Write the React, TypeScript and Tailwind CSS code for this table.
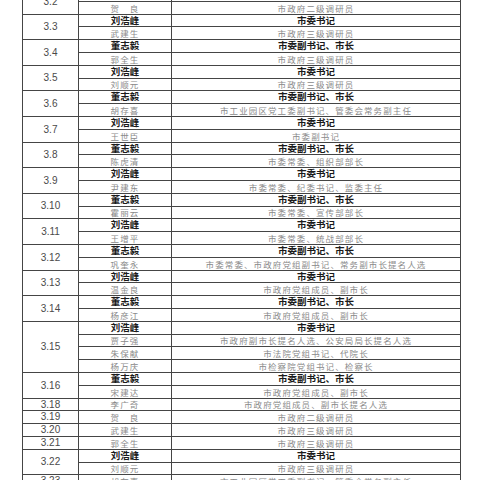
import React from "react";

type Row = { name: string; pos: string; bold: boolean };
type Group = { n: string; rows: Row[] };

const B = (name: string, pos: string): Row => ({ name, pos, bold: true });
const G = (name: string, pos: string): Row => ({ name, pos, bold: false });

const LIU = () => B("刘浩峰", "市委书记");
const DONG = () => B("董志毅", "市委副书记、市长");

const groups: Group[] = [
  { n: "3.2", rows: [DONG(), G("贺　良", "市政府二级调研员")] },
  { n: "3.3", rows: [LIU(), G("武建生", "市政府三级调研员")] },
  { n: "3.4", rows: [DONG(), G("郭全生", "市政府三级调研员")] },
  { n: "3.5", rows: [LIU(), G("刘顺元", "市政府三级调研员")] },
  { n: "3.6", rows: [DONG(), G("胡存喜", "市工业园区党工委副书记、管委会常务副主任")] },
  { n: "3.7", rows: [LIU(), G("王世臣", "市委副书记")] },
  { n: "3.8", rows: [DONG(), G("陈虎清", "市委常委、组织部部长")] },
  { n: "3.9", rows: [LIU(), G("尹建东", "市委常委、纪委书记、监委主任")] },
  { n: "3.10", rows: [DONG(), G("霍丽云", "市委常委、宣传部部长")] },
  { n: "3.11", rows: [LIU(), G("王增平", "市委常委、统战部部长")] },
  { n: "3.12", rows: [DONG(), G("巩奎永", "市委常委、市政府党组副书记、常务副市长提名人选")] },
  { n: "3.13", rows: [LIU(), G("温金良", "市政府党组成员、副市长")] },
  { n: "3.14", rows: [DONG(), G("杨彦江", "市政府党组成员、副市长")] },
  {
    n: "3.15",
    rows: [
      LIU(),
      G("贾子强", "市政府副市长提名人选、公安局局长提名人选"),
      G("朱保献", "市法院党组书记、代院长"),
      G("杨万庆", "市检察院党组书记、检察长"),
    ],
  },
  { n: "3.16", rows: [DONG(), G("宋建达", "市政府党组成员、副市长")] },
  { n: "3.18", rows: [G("李广奇", "市政府党组成员、副市长提名人选")] },
  { n: "3.19", rows: [G("贺　良", "市政府二级调研员")] },
  { n: "3.20", rows: [G("武建生", "市政府三级调研员")] },
  { n: "3.21", rows: [G("郭全生", "市政府三级调研员")] },
  { n: "3.22", rows: [LIU(), G("刘顺元", "市政府三级调研员")] },
  { n: "3.23", rows: [G("胡存喜", "市工业园区党工委副书记、管委会常务副主任")] },
];

const cjk = { fontFamily: '"Noto Sans CJK SC", "Noto Sans", sans-serif' };

// integer row edges so that every rule lands on a whole pixel (avg 12.8px pitch)
const edge = (k: number) => Math.round(12.8 * k);
const rowH = (k: number) => edge(k + 1) - edge(k);

function Cell({ text, bold }: { text: string; bold: boolean }) {
  return bold ? (
    <span className="text-[9.5px] leading-none font-bold text-[#1a1a1a]" style={cjk}>
      {text}
    </span>
  ) : (
    <span
      className="text-[8.5px] leading-none font-normal text-[#8a8a8a] tracking-[1.1px]"
      style={cjk}
    >
      {text}
    </span>
  );
}

export default function App() {
  let k = 0;
  return (
    <div className="w-[480px] h-[480px] overflow-hidden bg-white">
      <div className="mt-[-11px] ml-[22px] w-[439px] border-l border-r border-[#454545]">
        {groups.map((g) => (
          <div key={g.n} className="flex">
            <div className="w-[56px] shrink-0 border-r border-b border-[#454545] flex items-center justify-center">
              <span
                className="text-[10px] leading-none text-[#4a4a4a]"
                style={{ fontFamily: '"Liberation Sans", Arial, sans-serif' }}
              >
                {g.n}
              </span>
            </div>
            <div className="flex-1 flex flex-col">
              {g.rows.map((r, i) => {
                const h = rowH(k++);
                return (
                  <div
                    key={i}
                    className="flex border-b border-[#454545]"
                    style={{ height: h }}
                  >
                    <div className="w-[93px] shrink-0 border-r border-[#454545] flex items-center justify-center">
                      <Cell text={r.name} bold={r.bold} />
                    </div>
                    <div className="flex-1 flex items-center justify-center">
                      <Cell text={r.pos} bold={r.bold} />
                    </div>
                  </div>
                );
              })}
            </div>
          </div>
        ))}
      </div>
    </div>
  );
}
